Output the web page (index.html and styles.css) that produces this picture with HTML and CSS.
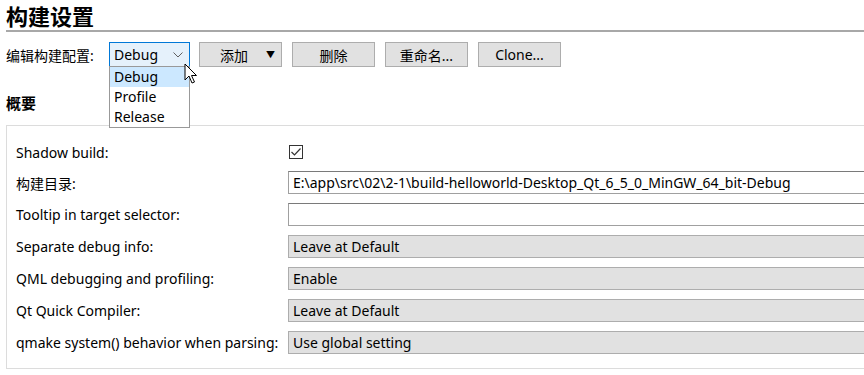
FILE: index.html
```html
<!DOCTYPE html>
<html lang="zh-CN">
<head>
    <meta charset="UTF-8">
    <meta name="viewport" content="width=device-width, initial-scale=1.0">
    <title>构建设置</title>
    <link rel="stylesheet" href="styles.css">
</head>
<body>
    <div class="page">
        <h1 class="title">构建设置</h1>

        <!-- Build configuration selector -->
        <div class="config-row">
            <span class="config-label">编辑构建配置:</span>
            <div class="combo-wrap">
                <div class="combo active">
                    <span>Debug</span>
                    <svg class="chevron" width="10" height="6" viewBox="0 0 10 6"><path d="M0.5 0.5 L5 5 L9.5 0.5" fill="none" stroke="#606060" stroke-width="1"/></svg>
                </div>
                <ul class="popup">
                    <li class="selected">Debug</li>
                    <li>Profile</li>
                    <li>Release</li>
                </ul>
                <svg class="cursor" width="14" height="22" viewBox="0 0 14 22">
                    <path d="M1 1 L1 17 L5 13 L8 20 L10.5 19 L7.5 12.5 L12.5 12.5 Z" fill="#fff" stroke="#000" stroke-width="1" stroke-linejoin="round"/>
                </svg>
            </div>
            <button class="btn btn-menu">添加 <span class="arrow">&#9660;</span></button>
            <button class="btn">删除</button>
            <button class="btn">重命名...</button>
            <button class="btn">Clone...</button>
        </div>

        <h2 class="section">概要</h2>

        <div class="panel">
            <div class="form">
                <label>Shadow build:</label>
                <div class="field-check">
                    <span class="checkbox">
                        <svg width="12" height="12" viewBox="0 0 12 12"><path d="M1.5 6 L4.5 9 L10.5 2.5" fill="none" stroke="#333" stroke-width="1.2"/></svg>
                    </span>
                </div>

                <label>构建目录:</label>
                <div class="input">E:\app\src\02\2-1\build-helloworld-Desktop_Qt_6_5_0_MinGW_64_bit-Debug</div>

                <label>Tooltip in target selector:</label>
                <div class="input"></div>

                <label>Separate debug info:</label>
                <div class="select">Leave at Default</div>

                <label>QML debugging and profiling:</label>
                <div class="select">Enable</div>

                <label>Qt Quick Compiler:</label>
                <div class="select">Leave at Default</div>

                <label>qmake system() behavior when parsing:</label>
                <div class="select">Use global setting</div>
            </div>
        </div>
    </div>
</body>
</html>
```

FILE: styles.css
```css
* {
    margin: 0;
    padding: 0;
    box-sizing: border-box;
}

body {
    font-family: "Noto Sans", "Noto Sans CJK SC", sans-serif;
    font-size: 14px;
    color: #000000;
    background: #ffffff;
    width: 864px;
    height: 375px;
    overflow: hidden;
}

.page {
    width: 900px;
    padding-left: 6px;
}

.title {
    font-size: 22px;
    font-weight: 700;
    line-height: 28px;
    padding-top: 2px;
    border-bottom: 2px solid #a8a8a8;
    height: 32px;
}

/* Config row */
.config-row {
    display: flex;
    align-items: center;
    margin-top: 10px;
    height: 25px;
}

.config-label {
    width: 103px;
    font-size: 14px;
}

.combo-wrap {
    position: relative;
    width: 81px;
    height: 25px;
    margin-right: 9px;
}

.combo {
    height: 25px;
    display: flex;
    align-items: center;
    justify-content: space-between;
    padding: 0 6px 0 4px;
    border: 1px solid #adadad;
    background: #e1e1e1;
    font-size: 14px;
}

.combo.active {
    border-color: #0078d7;
    background: #e5f1fb;
}

.popup {
    position: absolute;
    top: 24px;
    left: 0;
    width: 81px;
    list-style: none;
    background: #ffffff;
    border: 1px solid #999999;
    z-index: 2;
}

.popup li {
    height: 20px;
    line-height: 20px;
    padding-left: 4px;
    font-size: 14px;
}

.popup li.selected {
    background: #cce8ff;
}

.cursor {
    position: absolute;
    left: 75px;
    top: 21px;
    z-index: 3;
}

.btn {
    font-family: inherit;
    font-size: 14px;
    width: 83px;
    height: 25px;
    margin-right: 10px;
    border: 1px solid #adadad;
    background: #e1e1e1;
    color: #000000;
}

.btn-menu {
    display: flex;
    align-items: center;
    justify-content: space-between;
    padding: 0 6px 0 20px;
}

.btn-menu .arrow {
    font-size: 9px;
}

.section {
    font-size: 15px;
    font-weight: 700;
    margin-top: 26px;
    line-height: 20px;
    height: 22px;
}

/* Overview panel */
.panel {
    margin-top: 10px;
    border: 1px solid #dcdcdc;
    padding: 16px 0 13px 9px;
    height: 244px;
}

.form {
    display: grid;
    grid-template-columns: 272px 1fr;
    grid-template-rows: 20px repeat(6, 23px);
    row-gap: 9px;
    align-items: center;
    font-size: 14px;
}

.form label {
    white-space: nowrap;
}

.field-check {
    display: flex;
    align-items: center;
    padding-left: 1px;
}

.checkbox {
    width: 14px;
    height: 14px;
    border: 1px solid #333333;
    display: flex;
    align-items: center;
    justify-content: center;
    background: #ffffff;
}

.input,
.select {
    height: 23px;
    line-height: 21px;
    padding-left: 4px;
    font-size: 14px;
    white-space: nowrap;
    overflow: hidden;
}

.input {
    border: 1px solid #a0a0a0;
    border-top-color: #7a7a7a;
    background: #ffffff;
}

.select {
    border: 1px solid #adadad;
    background: #e1e1e1;
}
```
